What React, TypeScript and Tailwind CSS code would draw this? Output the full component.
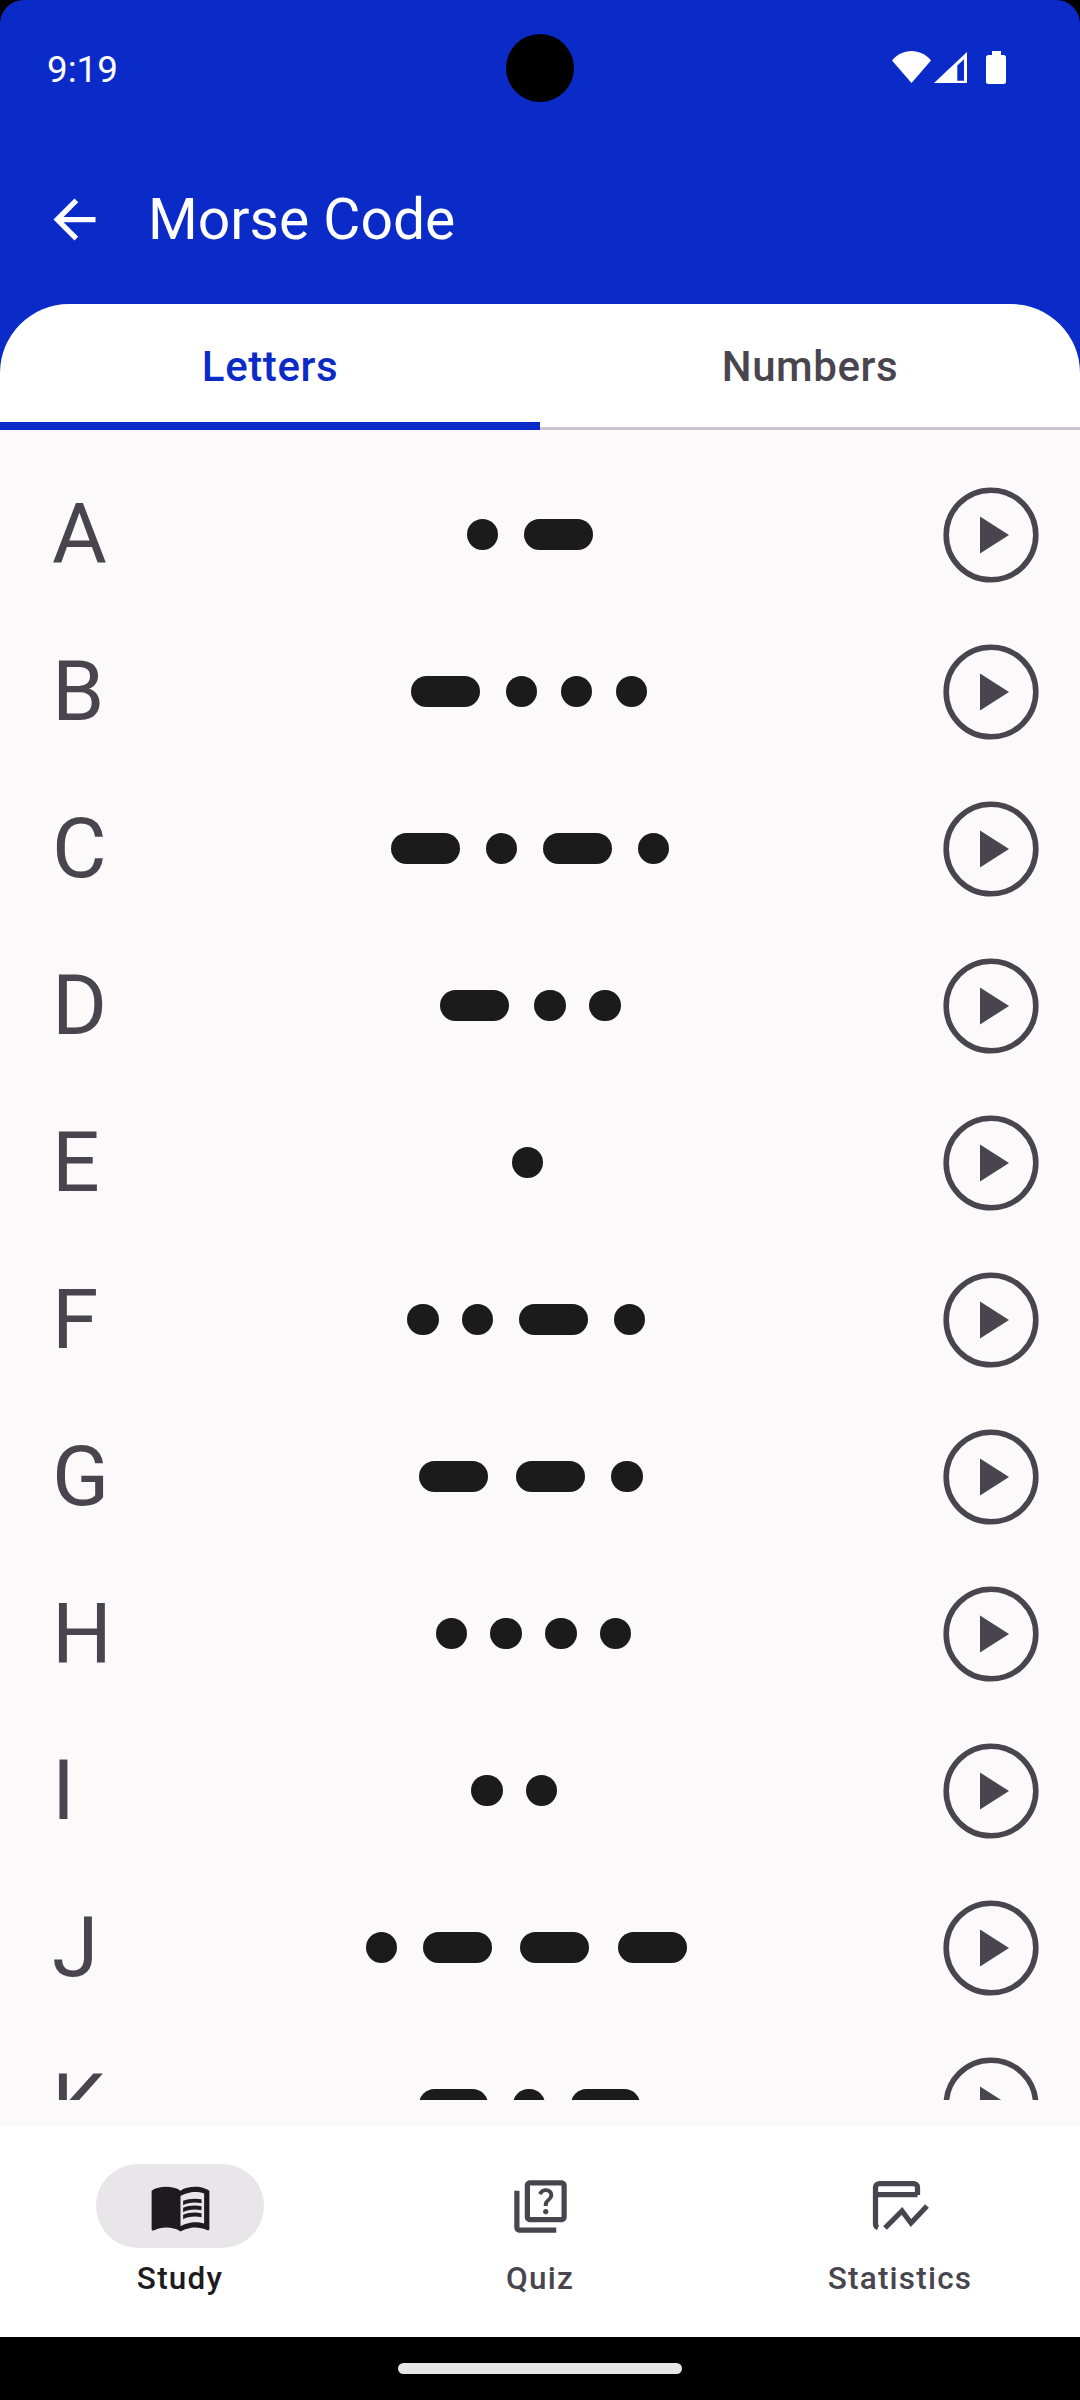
import React from "react";

type Row = { letter: string; code: string; offset: string };

// offset = where the first mark starts inside the morse column (not quite centred in the app)
const rows: Row[] = [
  { letter: "A", code: ".-", offset: "ml-[127px]" },
  { letter: "B", code: "-...", offset: "ml-[68.9px]" },
  { letter: "C", code: "-.-.", offset: "ml-[48.6px]" },
  { letter: "D", code: "-..", offset: "ml-[97.3px]" },
  { letter: "E", code: ".", offset: "ml-[171.7px]" },
  { letter: "F", code: "..-.", offset: "ml-[67.3px]" },
  { letter: "G", code: "--.", offset: "ml-[76.9px]" },
  { letter: "H", code: "....", offset: "ml-[95.7px]" },
  { letter: "I", code: "..", offset: "ml-[131.3px]" },
  { letter: "J", code: ".---", offset: "ml-[26px]" },
  { letter: "K", code: "-.-", offset: "ml-[76.3px]" },
];

function StatusIcons() {
  return (
    <div className="mb-[3px] flex items-start gap-[3px] pr-[74px]">
      <svg width="39" height="32" viewBox="0 0 39 32" fill="#fff">
        <path d="M19.5 32 0 9.5C5 3.5 12 0 19.5 0S34 3.5 39 9.5Z" />
      </svg>
      <svg width="33" height="31" viewBox="0 0 33 31" fill="#fff" fillRule="evenodd" className="mt-[1px]">
        <path d="M33 0V31H0ZM30 7.3V28.7H23.3V13.5Z" />
      </svg>
      <svg width="20" height="33" viewBox="0 0 20 33" fill="#fff" className="ml-[16px]">
        <path d="M6 0h9v4h2.5A2.5 2.5 0 0 1 20 6.500V30.500A2.500 2.500 0 0 1 17.500 33H2.500A2.500 2.500 0 0 1 0 30.500V6.500A2.500 2.500 0 0 1 2.500 4H6Z" />
      </svg>
    </div>
  );
}

function PlayIcon() {
  return (
    <svg width="114" height="114" viewBox="0 0 114 114">
      <circle cx="57" cy="57" r="44.800" fill="none" stroke="#49454F" strokeWidth="5.600" />
      <path d="M46 38.500 75 57 46 75.500Z" fill="#49454F" />
    </svg>
  );
}

function Morse({ code, offset }: { code: string; offset: string }) {
  return (
    <div className={`flex items-center gap-[23.4px] ${offset}`}>
      {code.split("").map((c, i) =>
        c === "." ? (
          <span key={i} className="h-[31.4px] w-[31.4px] rounded-full bg-[#1B1B1B]" />
        ) : (
          <span key={i} className="mx-[2.4px] h-[31.4px] w-[69px] rounded-full bg-[#1B1B1B]" />
        )
      )}
    </div>
  );
}

function LetterRow({ letter, code, offset }: Row) {
  return (
    <div className="flex h-[157px] shrink-0 items-center">
      <div className="w-[340px] shrink-0 pl-[52px] text-[84px] leading-[100px] text-[#49454F]">{letter}</div>
      <div className="min-w-0 flex-1">
        <Morse code={code} offset={offset} />
      </div>
      <div className="mr-[32px] shrink-0">
        <PlayIcon />
      </div>
    </div>
  );
}

function NavItem({ label, active, children }: { label: string; active?: boolean; children: React.ReactNode }) {
  return (
    <div className="flex flex-col items-center pt-[37px]">
      <div className={`flex h-[84px] w-[168px] items-center justify-center rounded-full ${active ? "bg-[#E8E6E8]" : ""}`}>
        {children}
      </div>
      <span
        className={`mt-[7px] text-[31.5px] font-medium leading-[48px] tracking-[1.2px] ${
          active ? "text-[#1D1B20]" : "text-[#49454F]"
        }`}
      >
        {label}
      </span>
    </div>
  );
}

export default function App() {
  return (
    <div className="flex h-[2400px] w-[1080px] flex-col overflow-hidden bg-black font-['Roboto',sans-serif]">
      <div className="relative h-[304px] shrink-0 rounded-t-[24px] bg-[#0A2BC8] text-white">
        <div className="flex h-[138px] items-center justify-between">
          <span className="pl-[47px] pt-[2px] text-[36.75px] leading-[48px]">9:19</span>
          <StatusIcons />
        </div>
        <div className="absolute left-[506px] top-[34px] h-[68px] w-[68px] rounded-full bg-black" />
        <div className="flex h-[162px] items-center pl-[43px]">
          <svg width="63" height="63" viewBox="0 0 24 24" fill="#fff">
            <path d="M20 11H7.830l5.590-5.590L12 4l-8 8 8 8 1.410-1.410L7.830 13H20v-2z" />
          </svg>
          <span className="ml-[42px] mt-[2px] text-[57px] leading-[76px]">Morse Code</span>
        </div>
      </div>

      <div className="relative flex min-h-0 flex-1 flex-col bg-[#0A2BC8]">
        <div className="grid h-[126px] shrink-0 grid-cols-2 overflow-hidden rounded-t-[69px] bg-white text-[42px] font-medium leading-[50px] tracking-[0.6px]">
          <div className="border-b-[8px] border-[#0A2BC8] pt-[38px] text-center text-[#0A2BC8]">Letters</div>
          <div className="border-b-[3px] border-[#CAC4D0] pt-[38px] text-center text-[#49454F]">Numbers</div>
        </div>
        <div className="min-h-0 flex-1 bg-[#FBF9FA] pb-[27px]">
          <div className="flex h-full flex-col overflow-hidden pt-[26px]">
            {rows.map((r) => (
              <LetterRow key={r.letter} {...r} />
            ))}
          </div>
        </div>
      </div>

      <div className="grid h-[210px] shrink-0 grid-cols-3 bg-white">
        <NavItem label="Study" active>
          <svg width="63" height="63" viewBox="0 0 24 24" fill="#1D1B20">
            <path d="M21 5c-1.110-.35-2.330-.5-3.500-.5-1.950 0-4.050.4-5.500 1.500-1.450-1.100-3.550-1.500-5.500-1.500S2.450 4.900 1 6v14.650c0 .25.25.5.5.5.1 0 .15-.05.25-.05C3.100 20.450 5.050 20 6.500 20c1.950 0 4.050.4 5.500 1.500 1.350-.85 3.800-1.500 5.500-1.500 1.650 0 3.350.3 4.750 1.050.1.05.15.05.25.05.25 0 .5-.25.5-.5V6c-.6-.45-1.250-.75-2-1zm0 13.500c-1.100-.35-2.300-.5-3.500-.5-1.700 0-4.150.65-5.500 1.500V8c1.350-.85 3.800-1.500 5.500-1.500 1.200 0 2.400.15 3.500.5v11.500z" />
            <path d="M17.500 10.500c.88 0 1.730.09 2.500.26V9.240c-.79-.15-1.640-.24-2.500-.24-1.700 0-3.240.29-4.500.83v1.660c1.130-.64 2.700-.99 4.500-.99zM13 12.490v1.660c1.130-.64 2.700-.99 4.500-.99.88 0 1.730.09 2.500.26V11.900c-.79-.15-1.640-.24-2.500-.24-1.700 0-3.240.3-4.500.83zM17.500 14.330c-1.700 0-3.240.29-4.500.83v1.660c1.130-.64 2.700-.99 4.500-.99.88 0 1.730.09 2.500.26v-1.520c-.79-.16-1.640-.24-2.500-.24z" />
          </svg>
        </NavItem>
        <NavItem label="Quiz">
          <svg width="63" height="63" viewBox="0 0 24 24" fill="#49454F">
            <path d="M4 6H2v14c0 1.100.9 2 2 2h14v-2H4V6zm16-4H8c-1.100 0-2 .9-2 2v12c0 1.100.9 2 2 2h12c1.100 0 2-.9 2-2V4c0-1.100-.9-2-2-2zm0 14H8V4h12v12z" />
            <path d="M14.010 15c-.59 0-1.050-.47-1.050-1.050 0-.59.47-1.040 1.050-1.040.59 0 1.040.45 1.040 1.040-.01.58-.45 1.050-1.040 1.050zm2.500-6.170c-.63.93-1.230 1.210-1.560 1.810-.13.24-.18.4-.18 1.180h-1.520c0-.41-.06-1.080.26-1.650.41-.73 1.180-1.160 1.630-1.800.48-.68.21-1.940-1.140-1.940-.88 0-1.320.67-1.500 1.230l-1.370-.57C11.510 5.960 12.520 5 13.990 5c1.230 0 2.080.56 2.510 1.260.37.61.58 1.730.01 2.570z" />
          </svg>
        </NavItem>
        <NavItem label="Statistics">
          <svg width="60" height="60" viewBox="0 0 60 60" fill="none" stroke="#49454F" strokeWidth="5.250">
            <path d="M47.500 19V11.500A4 4 0 0 0 43.500 7.500H9.500A4 4 0 0 0 5.500 11.500V48A4 4 0 0 0 8 51.700" />
            <path d="M6 18.500H47.500" />
            <path d="M15 52 32 35 41 47 57 30" />
          </svg>
        </NavItem>
      </div>

      <div className="flex h-[63px] shrink-0 justify-center pt-[26px]">
        <div className="h-[11px] w-[284px] rounded-full bg-[#E6E6E6]" />
      </div>
    </div>
  );
}
